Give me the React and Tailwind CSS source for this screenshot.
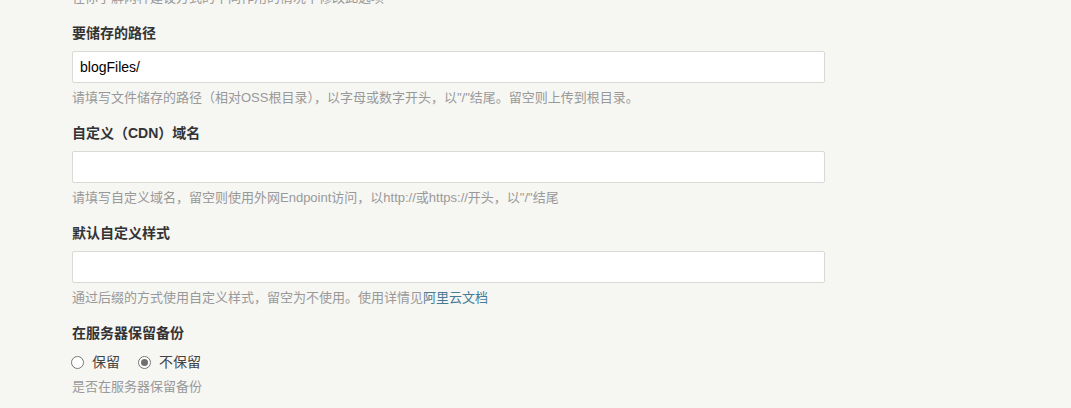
import React from "react";

const font = { fontFamily: '"Liberation Sans", Arial, "Noto Sans CJK SC", sans-serif' };

function Field({ label, value, children }) {
  return (
    <li className="mt-4">
      <label className="block h-5 leading-5 text-[14px] font-bold text-[#333]">{label}</label>
      <input
        type="text"
        defaultValue={value}
        className="mt-2 block w-[753px] h-8 px-[7px] bg-white border border-[#d9d9d6] rounded-[2px] text-[14px] text-[#000] outline-none"
        style={font}
      />
      <p className="mt-[6px] h-[18px] leading-[18px] text-[13px] text-[#999]">{children}</p>
    </li>
  );
}

function Radio({ checked, label }) {
  return (
    <span className="flex items-center">
      <span className="w-[13px] h-[13px] rounded-full border border-[#767676] bg-white flex items-center justify-center">
        {checked && <span className="w-[7px] h-[7px] rounded-full bg-[#6f6f6f]" />}
      </span>
      <span className="ml-[8px] text-[14px] text-[#444]">{label}</span>
    </span>
  );
}

export default function App() {
  return (
    <div className="w-[1071px] h-[408px] overflow-hidden bg-[#f6f6f3]" style={font}>
      <ul className="pl-[72px] -mt-[27px]">
        <li className="mt-4">
          <p className="h-[18px] leading-[18px] text-[13px] text-[#999]">在你了解两种建设方式的不同作用的情况下修改此选项</p>
        </li>
        <Field label="要储存的路径" value="blogFiles/">
          请填写文件储存的路径（相对OSS根目录），以字母或数字开头，以"/"结尾。留空则上传到根目录。
        </Field>
        <Field label="自定义（CDN）域名" value="">
          请填写自定义域名，留空则使用外网Endpoint访问，以http://或https://开头，以"/"结尾
        </Field>
        <Field label="默认自定义样式" value="">
          通过后缀的方式使用自定义样式，留空为不使用。使用详情见<a className="text-[#467b96]" href="#">阿里云文档</a>
        </Field>
        <li className="mt-4">
          <label className="block h-5 leading-5 text-[14px] font-bold text-[#333]">在服务器保留备份</label>
          <div className="mt-[9px] h-5 flex items-center gap-[18px] -ml-px">
            <Radio label="保留" />
            <Radio checked label="不保留" />
          </div>
          <p className="mt-[6px] h-[18px] leading-[18px] text-[13px] text-[#999]">是否在服务器保留备份</p>
        </li>
      </ul>
    </div>
  );
}
